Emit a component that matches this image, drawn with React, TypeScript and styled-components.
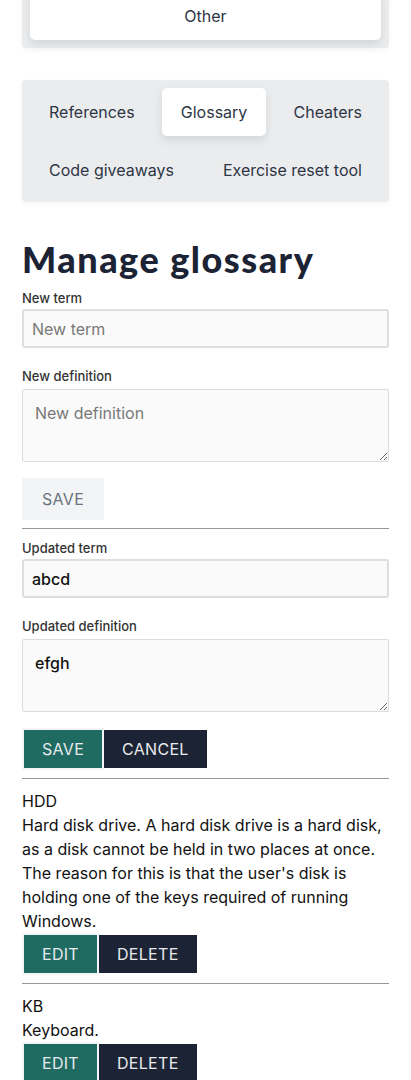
import React from "react";
import styled, { createGlobalStyle } from "styled-components";

const Global = createGlobalStyle`
  html, body { margin: 0; padding: 0; background: #ffffff; }
  body { font-family: Inter, "Noto Sans", sans-serif; color: #111111; }
  * { box-sizing: border-box; }
`;

const Page = styled.div`
  width: 411px;
  padding: 0 22px;
  margin-top: -16px;
  display: flex;
  flex-direction: column;
`;

const TabPanel = styled.div<{ $mt?: number }>`
  background: #ebecee;
  border-radius: 4px;
  padding: 8px;
  display: flex;
  flex-wrap: wrap;
  justify-content: space-between;
  row-gap: 10px;
  margin-top: ${(p) => p.$mt ?? 0}px;
  box-shadow: 0 2px 6px rgba(0, 0, 0, 0.04);
`;

const Tab = styled.button<{ $active?: boolean; $full?: boolean }>`
  font-family: Inter, sans-serif;
  font-size: 16px;
  color: #2d3544;
  height: 48px;
  padding: 0 19px;
  border: none;
  border-radius: 5px;
  background: ${(p) => (p.$active ? "#ffffff" : "transparent")};
  box-shadow: ${(p) => (p.$active ? "0 4px 10px rgba(0,0,0,0.10)" : "none")};
  flex: ${(p) => (p.$full ? "1 1 100%" : "0 0 auto")};
  cursor: pointer;
`;

const Heading = styled.h1`
  font-family: Lato, sans-serif;
  font-weight: 900;
  font-size: 36px;
  line-height: 40px;
  color: #1b2334;
  margin: 37px 0 10px;
  letter-spacing: 1.5px;
`;

const Label = styled.label<{ $mt?: number }>`
  display: block;
  font-size: 13px;
  font-weight: 500;
  line-height: 18px;
  color: #333333;
  margin-top: ${(p) => p.$mt ?? 0}px;
  margin-bottom: 2px;
`;

const Input = styled.input`
  display: block;
  width: 100%;
  height: 39px;
  border: 2px solid #dedede;
  border-radius: 3px;
  background: #fafafa;
  padding: 0 8px;
  font-family: Inter, sans-serif;
  font-size: 16px;
  font-weight: 500;
  color: #111111;
  &::placeholder { color: #787878; font-weight: 400; }
`;

const TextArea = styled.textarea`
  display: block;
  width: 100%;
  height: 73px;
  margin-top: 2px;
  border: 1px solid #dcdcdc;
  border-radius: 2px;
  background: #fafafa;
  padding: 11px 12px;
  font-family: Inter, sans-serif;
  font-size: 16px;
  font-weight: 500;
  line-height: 24px;
  color: #111111;
  resize: vertical;
  &::placeholder { color: #787878; font-weight: 400; }
`;

const ButtonRow = styled.div<{ $mt?: number }>`
  display: flex;
  align-items: center;
  margin-top: ${(p) => p.$mt ?? 0}px;
`;

const Button = styled.button<{ $variant: "primary" | "dark" | "disabled" }>`
  font-family: Inter, sans-serif;
  font-size: 16px;
  letter-spacing: 0.3px;
  height: ${(p) => (p.$variant === "dark" ? 38 : 42)}px;
  padding: 0 18px;
  border: ${(p) => (p.$variant === "dark" ? "none" : "2px solid #f3f4f6")};
  border-radius: 0;
  background: ${(p) =>
    p.$variant === "primary" ? "#1f6b62" : p.$variant === "dark" ? "#1b2334" : "#f3f4f6"};
  color: ${(p) => (p.$variant === "disabled" ? "#6b7280" : "#e8eaee")};
  cursor: pointer;
`;

const Rule = styled.hr<{ $mt?: number; $mb?: number }>`
  border: none;
  border-top: 1px solid #999999;
  margin: ${(p) => p.$mt ?? 8}px 0 ${(p) => p.$mb ?? 8}px;
  width: 100%;
`;

const Entry = styled.div`
  font-size: 16px;
  line-height: 24px;
  color: #111111;
`;

const Term = styled.div``;
const Definition = styled.div``;

const entries = [
  {
    term: "HDD",
    def: "Hard disk drive. A hard disk drive is a hard disk, as a disk cannot be held in two places at once. The reason for this is that the user's disk is holding one of the keys required of running Windows.",
  },
  { term: "KB", def: "Keyboard." },
];

export default function App() {
  return (
    <>
      <Global />
      <Page>
        <TabPanel>
          <Tab $active $full>Other</Tab>
        </TabPanel>
        <TabPanel $mt={32}>
          <Tab>References</Tab>
          <Tab $active>Glossary</Tab>
          <Tab>Cheaters</Tab>
          <Tab>Code giveaways</Tab>
          <Tab>Exercise reset tool</Tab>
        </TabPanel>
        <Heading>Manage glossary</Heading>
        <Label>New term</Label>
        <Input placeholder="New term" />
        <Label $mt={19}>New definition</Label>
        <TextArea placeholder="New definition" />
        <ButtonRow $mt={16}>
          <Button $variant="disabled">SAVE</Button>
        </ButtonRow>
        <Rule />
        <Label $mt={2}>Updated term</Label>
        <Input defaultValue="abcd" />
        <Label $mt={19}>Updated definition</Label>
        <TextArea defaultValue="efgh" />
        <ButtonRow $mt={16}>
          <Button $variant="primary">SAVE</Button>
          <Button $variant="dark">CANCEL</Button>
        </ButtonRow>
        <Rule $mb={10} />
        {entries.map((e, i) => (
          <React.Fragment key={e.term}>
            <Entry>
              <Term>{e.term}</Term>
              <Definition>{e.def}</Definition>
              <ButtonRow>
                <Button $variant="primary">EDIT</Button>
                <Button $variant="dark">DELETE</Button>
              </ButtonRow>
            </Entry>
            {i < entries.length - 1 && <Rule $mb={10} />}
          </React.Fragment>
        ))}
      </Page>
    </>
  );
}
